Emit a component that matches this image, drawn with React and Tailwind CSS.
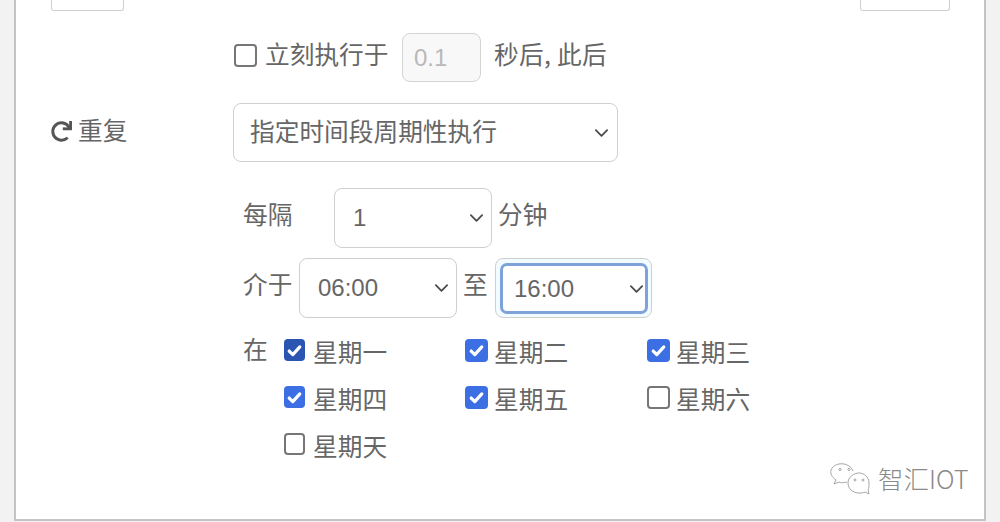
import React from "react";
import { FaRedo } from "react-icons/fa";

const font = { fontFamily: '"Noto Sans CJK SC", "Noto Sans", sans-serif' };

function Chevron({ className = "" }) {
  return (
    <svg viewBox="0 0 16 10" className={`w-[15px] h-[10px] shrink-0 ${className}`} fill="none" stroke="#4a4a4a" strokeWidth="1.9" strokeLinecap="round" strokeLinejoin="round">
      <path d="M2 2l6 6 6-6" />
    </svg>
  );
}

function Select({ value, className = "", cjk = false }) {
  return (
    <div className={`flex items-center justify-between rounded-[8px] border border-[#cfcfcf] bg-white ${className}`}>
      <span className={cjk ? "-mt-[3px]" : "font-['Liberation_Sans'] text-[24px] text-[#666]"}>{value}</span>
      <Chevron />
    </div>
  );
}

function Check({ label, checked, dark, wide }) {
  const size = wide ? "w-[23px] h-[23px] -mr-[1px]" : "w-[21px] h-[22px] mr-[1px]";
  return (
    <div className="flex items-center h-[24px]">
      {checked ? (
        <span className={`${size} -mt-[2px] rounded-[4px] flex items-center justify-center ${dark ? "bg-[#2a55b0]" : "bg-[#3b6fe3]"}`}>
          <svg viewBox="0 0 16 16" className="w-[17px] h-[17px]" fill="none" stroke="#fff" strokeWidth="3" strokeLinecap="round" strokeLinejoin="round">
            <path d="M3 8.5l3.4 3.4L13 4.6" />
          </svg>
        </span>
      ) : (
        <span className={`${size} -mt-[2px] rounded-[4px] border-2 border-[#767676] bg-white`} />
      )}
      <span className="ml-[7px] mt-[1px] text-[24.7px] leading-none font-normal text-[#666]">{label}</span>
    </div>
  );
}

export default function App() {
  return (
    <div className="w-[1000px] h-[522px] bg-[#f2f2f2] px-[14px] text-[#666]" style={font}>
      <div className="relative w-[972px] h-[521px] bg-white border-x-2 border-b-2 border-[#c4c4c4] overflow-hidden pl-[35px]">
        <div className="flex justify-between h-[11px] pr-[34px]">
          <div className="w-[73px] h-[11px] rounded-b-[3px] border-x border-b border-[#cfcfcf]" />
          <div className="w-[90px] h-[11px] rounded-b-[3px] border-x border-b border-[#cfcfcf]" />
        </div>

        <div className="ml-[182px] mt-[22px] flex items-center h-[49px] text-[24.7px]">
          <span className="ml-[1px] w-[23px] h-[23px] rounded-[4px] border-2 border-[#767676] -mt-[5px]" />
          <span className="ml-[8px] -mt-[7px] w-[123px] whitespace-nowrap">立刻执行于</span>
          <div className="ml-[14px] w-[79px] h-[49px] rounded-[8px] border border-[#d4d4d4] bg-[#f8f8f8] flex items-center pl-[11px] font-['Liberation_Sans'] text-[24px] text-[#b9b9b9]">0.1</div>
          <span className="ml-[13px] -mt-[7px] whitespace-nowrap tracking-[0.3px]">秒后, 此后</span>
        </div>

        <div className="mt-[21px] flex items-center h-[59px]">
          <div className="w-[182px] flex items-center">
            <FaRedo className="w-[21px] h-[21px] text-[#555] -mt-[2px]" />
            <span className="ml-[6px] -mt-[6px] text-[24.7px] leading-none">重复</span>
          </div>
          <Select cjk value="指定时间段周期性执行" className="w-[385px] h-[59px] pl-[16px] pr-[8px] text-[24.7px]" />
        </div>

        <div className="ml-[192px] mt-[26px] flex items-center h-[60px] text-[24.7px]">
          <span className="w-[91px] -mt-[9px]">每隔</span>
          <Select value="1" className="w-[158px] h-[60px] pl-[18px] pr-[7px]" />
          <span className="ml-[6px] -mt-[9px]">分钟</span>
        </div>

        <div className="ml-[192px] mt-[10px] flex items-center h-[60px] text-[24.7px]">
          <span className="w-[56px] -mt-[9px]">介于</span>
          <Select value="06:00" className="w-[158px] h-[60px] pl-[18px] pr-[7px]" />
          <span className="ml-[6px] w-[32px] -mt-[9px]">至</span>
          <div className="w-[157px] h-[60px] rounded-[8px] border border-[#cfcfcf] bg-[#f2fbff] p-[4px]">
            <Select value="16:00" className="w-[148px] h-[51px] !border-[3px] !border-[#7fa3d9] !rounded-[7px] pl-[11px] pr-[1px]" />
          </div>
        </div>

        <div className="ml-[192px] mt-[21px] flex items-start">
          <span className="w-[41px] text-[24.7px] leading-none -mt-[3px]">在</span>
          <div className="grid grid-cols-[181px_182px_182px] gap-y-[23px]">
            <Check label="星期一" checked dark />
            <Check label="星期二" checked wide />
            <Check label="星期三" checked wide />
            <Check label="星期四" checked />
            <Check label="星期五" checked wide />
            <Check label="星期六" wide />
            <Check label="星期天" />
          </div>
        </div>

        <div className="absolute left-[814px] top-[463px] flex items-center text-[#8a8a8a]">
          <svg viewBox="0 0 42 34" className="w-[42px] h-[34px]" fill="none" stroke="#8f8f8f" strokeWidth="0.8">
            <path d="M17 19c-4 1-6 1-8-0l-5 2 2-4C2 14 0 11 1 7 3 2 9 0 14 1c5 1 8 4 9 7" />
            <path d="M39 20c0-6-5-10-10-10s-11 4-11 10 5 10 11 10c2 0 4 0 6-1l4 2-1-4c1-2 1-4 1-7z" />
            <circle cx="10" cy="6.5" r="1.1" />
            <circle cx="19" cy="6.5" r="1.1" />
            <circle cx="25" cy="17" r="1" />
            <circle cx="33" cy="17" r="1" />
          </svg>
          <span className="ml-[6px] -mt-[4px] text-[25.5px] font-light leading-none whitespace-nowrap">智汇IOT</span>
        </div>
      </div>
    </div>
  );
}
